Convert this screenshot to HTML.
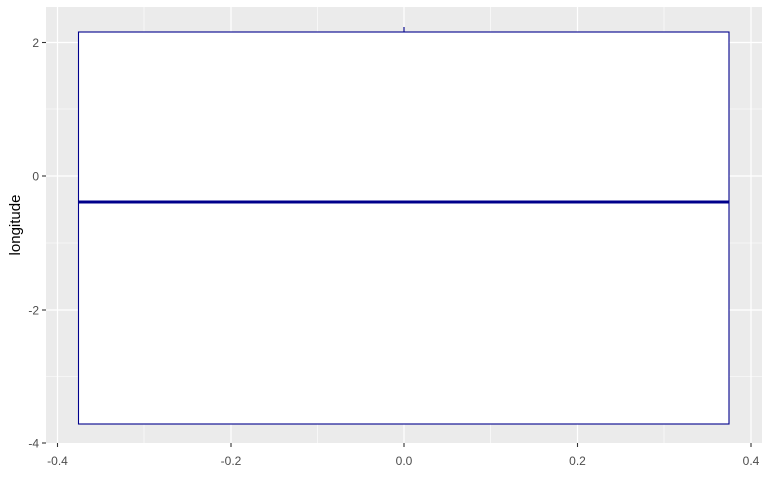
<!DOCTYPE html>
<html><head><style>
body{margin:0;background:#fff;width:770px;height:475px;overflow:hidden}
svg text{font-family:"Liberation Sans",sans-serif}
</style></head><body>
<svg width="770" height="475" xmlns="http://www.w3.org/2000/svg">
<rect x="46" y="7" width="716" height="436" fill="#ebebeb"/>
<g stroke="#fff" stroke-width="0.6">
<line x1="46" x2="762" y1="109" y2="109"/><line x1="46" x2="762" y1="243" y2="243"/><line x1="46" x2="762" y1="376.5" y2="376.5"/>
<line x1="144" x2="144" y1="7" y2="443"/><line x1="317.5" x2="317.5" y1="7" y2="443"/><line x1="490.5" x2="490.5" y1="7" y2="443"/><line x1="664" x2="664" y1="7" y2="443"/>
</g>
<g stroke="#fff" stroke-width="1.2">
<line x1="46" x2="762" y1="42.5" y2="42.5"/><line x1="46" x2="762" y1="176" y2="176"/><line x1="46" x2="762" y1="310" y2="310"/>
<line x1="57.5" x2="57.5" y1="7" y2="443"/><line x1="231" x2="231" y1="7" y2="443"/><line x1="404" x2="404" y1="7" y2="443"/><line x1="577.5" x2="577.5" y1="7" y2="443"/><line x1="751" x2="751" y1="7" y2="443"/>
</g>
<line x1="404" x2="404" y1="27" y2="32" stroke="#00008b" stroke-width="1.1"/>
<rect x="78.5" y="32" width="650.5" height="392" fill="#fff" stroke="#00008b" stroke-width="1.1"/>
<line x1="78.5" x2="729" y1="202" y2="202" stroke="#00008b" stroke-width="3"/>
<g stroke="#333" stroke-width="1.1">
<line x1="42" x2="46" y1="42.5" y2="42.5"/><line x1="42" x2="46" y1="176" y2="176"/><line x1="42" x2="46" y1="310" y2="310"/><line x1="42" x2="46" y1="443" y2="443"/>
<line x1="57.5" x2="57.5" y1="443" y2="447"/><line x1="231" x2="231" y1="443" y2="447"/><line x1="404" x2="404" y1="443" y2="447"/><line x1="577.5" x2="577.5" y1="443" y2="447"/><line x1="751" x2="751" y1="443" y2="447"/>
</g>
<g fill="#4d4d4d" font-size="12" text-anchor="end">
<text x="39" y="47">2</text><text x="39" y="180.5">0</text><text x="39" y="314.5">-2</text><text x="39" y="447.5">-4</text>
</g>
<g fill="#4d4d4d" font-size="12" text-anchor="middle">
<text x="57.5" y="465">-0.4</text><text x="231" y="465">-0.2</text><text x="404" y="465">0.0</text><text x="577.5" y="465">0.2</text><text x="751" y="465">0.4</text>
</g>
<text transform="translate(20,225) rotate(-90)" font-size="15" text-anchor="middle" fill="#000">longitude</text>
</svg>
</body></html>
